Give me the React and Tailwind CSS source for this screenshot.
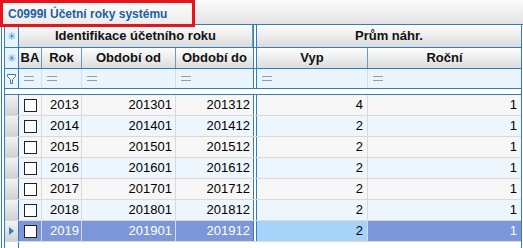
import React from "react";

const rows = [2013, 2014, 2015, 2016, 2017, 2018, 2019].map((y) => ({
  rok: y,
  od: `${y}01`,
  do: `${y}12`,
  vyp: y === 2013 ? 4 : 2,
  rocni: 1,
}));

const font = { fontFamily: '"Liberation Sans", Arial, sans-serif' };

function Star() {
  return <span className="text-[11px] leading-none text-[#3a8fd2]">✳</span>;
}

function Funnel() {
  return (
    <svg width="9" height="10" viewBox="0 0 9 10">
      <path d="M0.5 0.5 H8.5 V2.5 L5.5 5.5 V9.5 H3.5 V5.5 L0.5 2.5 Z" fill="#fff" stroke="#2f7fc0" strokeWidth="1" />
    </svg>
  );
}

function Sep() {
  return <div className="w-[4px] shrink-0 border-x border-[#2f7fc0] bg-white" />;
}

function HeadCell({ w, children, last }) {
  return (
    <div
      className={`${w} flex items-center justify-center border-[#5d9dd0] bg-linear-to-b from-[#fdfdfd] to-[#dcdcdc] text-[13px] font-bold text-[#111] ${last ? "flex-1" : "shrink-0 border-r"}`}
    >
      {children}
    </div>
  );
}

// the "=" of the filter row, drawn as two thin grey strokes
function Eq() {
  return (
    <span className="flex flex-col gap-[3px]">
      <span className="block w-[10px] h-px bg-[#9a9a9a]" />
      <span className="block w-[10px] h-px bg-[#9a9a9a]" />
    </span>
  );
}

function FilterCell({ w, last }) {
  return (
    <div className={`${w} flex items-center pl-[5px] border-[#d4dde6] ${last ? "flex-1" : "shrink-0 border-r"}`}>
      <Eq />
    </div>
  );
}

export default function App() {
  return (
    <div className="w-[523px] h-[248px] overflow-hidden bg-white" style={font}>
      {/* title bar */}
      <div className="relative h-[25px] border-b border-[#2f7fc0] bg-linear-to-b from-[#fbfbfb] to-[#e3e3e3]">
        <div className="absolute left-0 top-0 w-[195px] h-[27px] border-[3px] border-[#e8141c] bg-linear-to-b from-[#fbfbfb] to-[#ececec] flex items-center pl-[5px]">
          <span className="text-[12px] font-bold text-[#1d5fa3]">C0999I Účetní roky systému</span>
        </div>
      </div>

      {/* grid */}
      <div className="h-[223px] pl-px mr-[1px]">
        <div className="h-full border-l border-[#2f7fc0] pl-[2px]">
          <div className="h-full border-l border-r border-[#2f7fc0] flex flex-col">
            {/* group header */}
            <div className="flex h-[23px] shrink-0 border-b border-[#2f7fc0]">
              <div className="w-[14px] shrink-0 border-r border-[#2f7fc0] bg-[#e9f3fc] flex items-center justify-center">
                <Star />
              </div>
              <HeadCell w="w-[234px]">Identifikace účetního roku</HeadCell>
              <Sep />
              <HeadCell w="" last>Prům náhr.</HeadCell>
            </div>

            {/* column header */}
            <div className="flex h-[21px] shrink-0 border-b border-[#2f7fc0]">
              <div className="w-[14px] shrink-0 border-r border-[#2f7fc0] bg-[#e9f3fc] flex items-center justify-center">
                <Star />
              </div>
              <HeadCell w="w-[23px]">BA</HeadCell>
              <HeadCell w="w-[40px]">Rok</HeadCell>
              <HeadCell w="w-[94px]">Období od</HeadCell>
              <div className="w-[77px] shrink-0 flex items-center justify-center bg-linear-to-b from-[#fdfdfd] to-[#dcdcdc] text-[13px] font-bold text-[#111]">
                Období do
              </div>
              <Sep />
              <HeadCell w="w-[111px]">Vyp</HeadCell>
              <HeadCell w="" last>Roční</HeadCell>
            </div>

            {/* filter row */}
            <div className="flex h-[20px] shrink-0 border-b border-[#2f7fc0] bg-[#eaf4fc]">
              <div className="w-[14px] shrink-0 border-r border-[#2f7fc0] flex items-center justify-center">
                <Funnel />
              </div>
              <FilterCell w="w-[23px]" />
              <FilterCell w="w-[40px]" />
              <FilterCell w="w-[94px]" />
              <div className="w-[77px] shrink-0 flex items-center pl-[5px]">
                <Eq />
              </div>
              <Sep />
              <FilterCell w="w-[111px]" />
              <FilterCell w="" last />
            </div>

            {/* gap */}
            <div className="h-[6px] shrink-0 border-b border-[#2f7fc0] bg-white" />

            {/* data rows */}
            {rows.map((r, i) => {
              const sel = i === rows.length - 1;
              const bg = sel ? "bg-[#7b96d9] text-white" : i % 2 === 0 ? "bg-[#f6f6f6] text-black" : "bg-[#edf5fd] text-black";
              return (
                <div key={r.rok} className={`flex h-[21px] shrink-0 border-b border-[#d9d9d9] text-[13px] ${bg}`}>
                  <div className="w-[14px] shrink-0 border-r border-[#2f7fc0] bg-linear-to-b from-[#f3f3f3] to-[#d2d2d2] flex items-center justify-center">
                    {sel && (
                      <svg width="5" height="8" viewBox="0 0 5 8">
                        <polygon points="0,0 5,4 0,8" fill="#2f7fc0" />
                      </svg>
                    )}
                  </div>
                  <div className="w-[23px] shrink-0 border-r border-[#d9d9d9] flex items-center justify-center">
                    <div className="w-[13px] h-[13px] border border-[#222] bg-white" />
                  </div>
                  <div className="w-[40px] shrink-0 border-r border-[#d9d9d9] flex items-center justify-end pr-[2px]">{r.rok}</div>
                  <div className="w-[94px] shrink-0 border-r border-[#d9d9d9] flex items-center justify-end pr-[3px]">{r.od}</div>
                  <div className="w-[77px] shrink-0 flex items-center justify-end pr-[3px]">{r.do}</div>
                  <Sep />
                  <div className={`w-[111px] shrink-0 border-r border-[#d9d9d9] flex items-center justify-end pr-[4px] ${sel ? "bg-[#a6d3fa] text-black" : ""}`}>
                    {r.vyp}
                  </div>
                  <div className="flex-1 flex items-center justify-end pr-[4px]">{r.rocni}</div>
                </div>
              );
            })}

            <div className="flex-1 flex">
              <div className="w-[14px] shrink-0 border-r border-[#2f7fc0]" />
            </div>
          </div>
        </div>
      </div>
    </div>
  );
}
